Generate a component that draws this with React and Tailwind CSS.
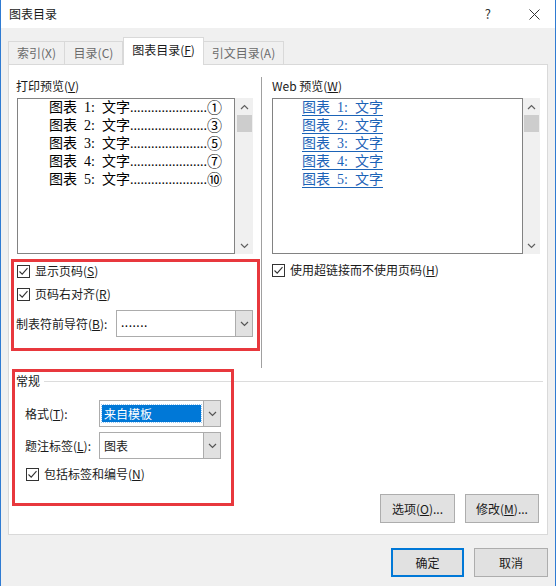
const ui = "font-['Noto_Sans_CJK_SC','Liberation_Sans',sans-serif]";
const serif = "font-['Liberation_Serif','Noto_Sans_CJK_SC',serif]";

const entries = [
    { n: '1', mark: '①' },
    { n: '2', mark: '③' },
    { n: '3', mark: '⑤' },
    { n: '4', mark: '⑦' },
    { n: '5', mark: '⑩' },
];

const Chevron = ({ up = false, color = '#555' }) => (
    <svg width="9" height="6" viewBox="0 0 9 6">
        <polyline
            points={up ? '1,5 4.5,1.5 8,5' : '1,1 4.5,4.5 8,1'}
            fill="none"
            stroke={color}
            strokeWidth="1.2"
        />
    </svg>
);

const Check = ({ label, k }) => {
    const [before, after] = label.split(`(${k})`);
    return (
        <div className="flex items-center h-[18px] gap-[5px]">
            <div className="w-[13px] h-[13px] border border-[#333] bg-white flex items-center justify-center">
                <svg width="11" height="11" viewBox="0 0 11 11">
                    <path d="M1.5 5.5 L4.2 8.2 L9.5 2.2" fill="none" stroke="#333" strokeWidth="1.1" />
                </svg>
            </div>
            <span className="text-[12px] leading-[18px] text-[#1a1a1a]">
                {before}(<u>{k}</u>){after}
            </span>
        </div>
    );
};

const Scrollbar = ({ w }) => (
    <div className={`${w} h-[156px] bg-[#f0f0f0] flex flex-col items-center`}>
        <div className="h-[17px] flex items-center justify-center">
            <Chevron up color="#606060" />
        </div>
        <div className="w-[15px] h-[17px] bg-[#cdcdcd]" />
        <div className="flex-1" />
        <div className="h-[17px] flex items-center justify-center">
            <Chevron color="#606060" />
        </div>
    </div>
);

const Dropdown = ({ w, children }) => (
    <div className={`${w} h-[27px] border border-[#acacac] bg-white flex`}>
        <div className="flex-1 flex items-center">{children}</div>
        <div className="w-[17px] bg-[#e1e1e1] border-l border-[#acacac] flex items-center justify-center">
            <Chevron />
        </div>
    </div>
);

const Button = ({ children, w, primary = false }) => (
    <button
        className={`${w} h-[29px] bg-[#e1e1e1] text-[12px] text-[#1a1a1a] flex items-center justify-center ${
            primary ? 'border-2 border-[#0078d7]' : 'border border-[#adadad]'
        }`}
    >
        {children}
    </button>
);

const Tab = ({ children, w, active = false }) => (
    <div
        className={`${w} flex items-center justify-center text-[12px] border-t border-x border-[#d9d9d9] ${
            active
                ? 'h-[28px] bg-white text-[#1a1a1a] -mb-px relative z-10 pb-[3px]'
                : 'h-[23px] bg-[#f0f0f0] text-[#6b6b6b] -ml-px first:ml-0'
        }`}
    >
        {children}
    </div>
);

// "图表 1: 文字" with the wide gaps of the Song face
const Caption = ({ n }) => (
    <>
        <span>图表</span>
        <span className="ml-[7px]">{n}:</span>
        <span className="ml-[7px]">文字</span>
    </>
);

export default function App() {
    return (
        <div className={`${ui} relative w-[556px] h-[586px] bg-[#f0f0f0] border-x border-[#2f7bd2] overflow-hidden`}>
            {/* title bar */}
            <div className="h-[28px] bg-white flex items-center pl-[8px] pr-[15px]">
                <span className="text-[12px] text-[#1a1a1a] flex-1">图表目录</span>
                <span className="text-[13px] text-[#333] mr-[38px]">?</span>
                <svg width="11" height="11" viewBox="0 0 11 11">
                    <path d="M0.5 0.5 L10.5 10.5 M10.5 0.5 L0.5 10.5" stroke="#333" strokeWidth="1" />
                </svg>
            </div>

            {/* tabs */}
            <div className="h-[36px] flex items-end pl-[7px]">
                <Tab w="w-[57px]">索引(X)</Tab>
                <Tab w="w-[59px]">目录(C)</Tab>
                <Tab w="w-[81px]" active>
                    <span>
                        图表目录(<u>F</u>)
                    </span>
                </Tab>
                <Tab w="w-[81px]">引文目录(A)</Tab>
            </div>

            {/* panel */}
            <div className="ml-[7px] w-[540px] h-[471px] border border-[#d9d9d9] bg-white pt-[12px] flex flex-col">
                <div className="flex h-[291px]">
                    {/* print preview */}
                    <div className="w-[252px] pl-[7px] flex flex-col">
                        <div className="h-[18px] text-[12px] leading-[18px] text-[#1a1a1a]">
                            打印预览(<u>V</u>)
                        </div>
                        <div className="mt-[3px] ml-[1px] flex">
                            <div className="w-[218px] h-[156px] border border-[#828282] pl-[31px]">
                                {entries.map(e => (
                                    <div
                                        key={e.n}
                                        className={`${serif} h-[18px] flex items-center text-[14px] leading-[18px] text-black whitespace-nowrap`}
                                    >
                                        <Caption n={e.n} />
                                        <span>......................</span>
                                        <span className="text-[15px] leading-[18px]">{e.mark}</span>
                                    </div>
                                ))}
                            </div>
                            <Scrollbar w="w-[18px]" />
                        </div>
                        <div className="mt-[8px] ml-[1px]">
                            <Check label="显示页码(S)" k="S" />
                        </div>
                        <div className="mt-[5px] ml-[1px]">
                            <Check label="页码右对齐(R)" k="R" />
                        </div>
                        <div className="mt-[7px] flex items-center h-[27px]">
                            <span className="w-[100px] text-[12px] text-[#1a1a1a]">
                                制表符前导符(<u>B</u>):
                            </span>
                            <Dropdown w="w-[137px]">
                                <span className="pl-[4px] text-[12px] leading-none pb-[4px] tracking-[0.5px]">.......</span>
                            </Dropdown>
                        </div>
                    </div>

                    <div className="w-px bg-[#a0a0a0]" />

                    {/* web preview */}
                    <div className="flex-1 pl-[10px] flex flex-col">
                        <div className="h-[18px] text-[12px] leading-[18px] text-[#1a1a1a]">
                            Web 预览(<u>W</u>)
                        </div>
                        <div className="mt-[3px] flex">
                            <div className="w-[251px] h-[156px] border border-[#828282] pl-[29px]">
                                {entries.map(e => (
                                    <div
                                        key={e.n}
                                        className={`${serif} h-[18px] flex items-center text-[14px] leading-[18px] text-[#1c63b7] whitespace-nowrap`}
                                    >
                                        <span className="flex border-b border-[#1c63b7] leading-[15px]">
                                            <Caption n={e.n} />
                                        </span>
                                    </div>
                                ))}
                            </div>
                            <Scrollbar w="w-[17px]" />
                        </div>
                        <div className="mt-[7px]">
                            <Check label="使用超链接而不使用页码(H)" k="H" />
                        </div>
                    </div>
                </div>

                {/* general group */}
                <div className="mt-[4px] h-[18px] pl-[7px] pr-[4px] flex items-center gap-[4px]">
                    <span className="text-[12px] text-[#1a1a1a]">常规</span>
                    <div className="flex-1 h-px bg-[#dcdcdc]" />
                </div>
                <div className="mt-[10px] pl-[16px] flex items-center h-[27px]">
                    <span className="w-[74px] text-[12px] text-[#1a1a1a]">
                        格式(<u>T</u>):
                    </span>
                    <Dropdown w="w-[122px]">
                        <div className="flex-1 mx-[2px] h-[17px] bg-[#0078d7] outline outline-1 outline-dotted outline-[#9cc7f0] text-white text-[12px] leading-[17px] pl-[2px]">
                            来自模板
                        </div>
                    </Dropdown>
                </div>
                <div className="mt-[5px] pl-[16px] flex items-center h-[27px]">
                    <span className="w-[74px] text-[12px] text-[#1a1a1a]">
                        题注标签(<u>L</u>):
                    </span>
                    <Dropdown w="w-[122px]">
                        <span className="pl-[4px] text-[12px] text-[#1a1a1a]">图表</span>
                    </Dropdown>
                </div>
                <div className="mt-[6px] pl-[17px]">
                    <Check label="包括标签和编号(N)" k="N" />
                </div>
                <div className="mt-[11px] pr-[8px] flex justify-end gap-[10px]">
                    <Button w="w-[75px]">
                        <span>
                            选项(<u>O</u>)...
                        </span>
                    </Button>
                    <Button w="w-[74px]">
                        <span>
                            修改(<u>M</u>)...
                        </span>
                    </Button>
                </div>
            </div>

            {/* dialog buttons */}
            <div className="mt-[13px] pr-[7px] flex justify-end gap-[10px]">
                <Button w="w-[73px]" primary>
                    确定
                </Button>
                <Button w="w-[74px]">取消</Button>
            </div>

            {/* red annotation frames */}
            <div className="absolute left-[10px] top-[259px] w-[249px] h-[92px] border-[3px] border-[#e8383d] pointer-events-none" />
            <div className="absolute left-[11px] top-[369px] w-[222px] h-[137px] border-[3px] border-[#e8383d] pointer-events-none" />
        </div>
    );
}
